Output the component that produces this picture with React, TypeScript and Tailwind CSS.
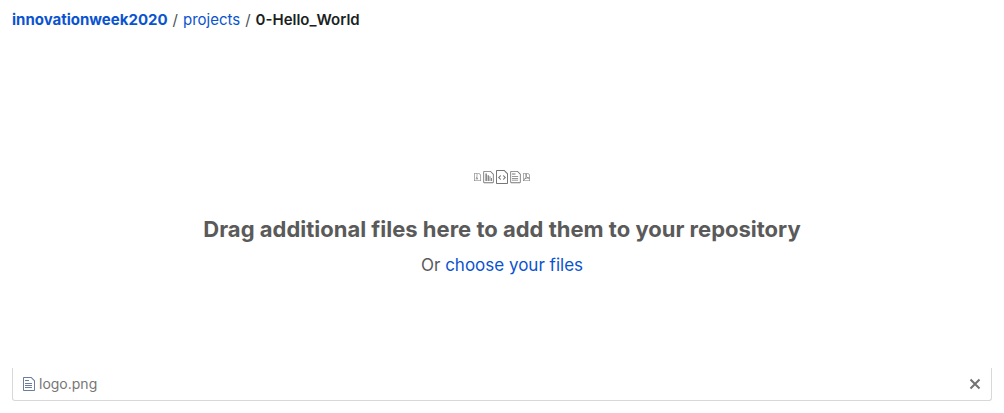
import React from "react";

const PAGE =
  "M8.5 1H1c-.55 0-1 .45-1 1v12c0 .55.45 1 1 1h10c.55 0 1-.45 1-1V4.5L8.5 1zM11 14H1V2h7l3 3v9z";

const GLYPHS = {
  zip: "M5 4V3h1v1H5zM4 4h1v1H4V4zm1 2V5h1v1H5zM4 6h1v1H4V6zm1 2V7h1v1H5zM4 9.28A2 2 0 0 0 3 11v1h4v-1a2 2 0 0 0-2-2V8H4v1.28zM6 10v1H4v-1h2zM4 2h1v1H4z",
  chart: "M2.5 4h1.6v8.5H2.5zM5 6h1.4v6.5H5zM7.2 7h1v5.5h-1zM9 9h1v3.5H9z",
  code: "M5 6.98L3.5 8.5 5 10l-.5 1L2 8.5 4.5 6l.5.98zM7.5 6L10 8.5 7.5 11l-.5-.98L8.5 8.5 7 7l.5-1z",
  text: "M6 5H2V4h4v1zM2 8h7V7H2v1zm0 2h7V9H2v1zm0 2h7v-1H2v1z",
};

type IconProps = { kind: keyof typeof GLYPHS | "pdf"; className: string };

function FileIcon({ kind, className }: IconProps) {
  return (
    <svg viewBox="0 0 12 16" className={className} fill="currentColor" aria-hidden="true">
      <path d={PAGE} />
      {kind === "pdf" ? (
        <path
          d="M1 13.5C4 12 6.4 6.5 5.6 2.6 5.2 1.5 4.6 3.5 5 5c.7 3 3 5 6 5.3M2.8 11C5 9.8 8 9.2 11 9.4"
          fill="none"
          stroke="currentColor"
          strokeWidth="1.3"
        />
      ) : (
        <path d={GLYPHS[kind]} />
      )}
    </svg>
  );
}

export default function App() {
  return (
    <main className="bg-white px-3 pt-2 pb-3 font-['Inter','Liberation_Sans',sans-serif] text-[#586069]">
      <nav aria-label="Breadcrumb" className="flex gap-[5px] text-[15px] leading-6 text-[#4b5158]">
        <a href="#root" className="font-bold text-[#0a53d0]">innovationweek2020</a>
        <span>/</span>
        <a href="#projects" className="text-[#0a53d0]">projects</a>
        <span>/</span>
        <strong className="font-semibold text-[#1b1f23]">0-Hello_World</strong>
      </nav>

      <section className="flex flex-col items-center pt-[135px] pb-[89px] text-center text-[#5a5a5a]">
        <div className="flex h-5 items-center gap-0.5 text-[#777777]">
          <FileIcon kind="zip" className="h-2.5 w-[7px]" />
          <FileIcon kind="chart" className="h-3.5 w-[11px]" />
          <FileIcon kind="code" className="h-4 w-3" />
          <FileIcon kind="text" className="h-3.5 w-[11px]" />
          <FileIcon kind="pdf" className="h-2.5 w-[7px]" />
        </div>
        <h1 className="mt-6 text-[22px] leading-9 font-bold">
          Drag additional files here to add them to your repository
        </h1>
        <p className="mt-1 text-[17px] leading-7">
          Or <a href="#choose" className="text-[#0a53d0]">choose your files</a>
        </p>
      </section>

      <div className="flex items-center gap-1 rounded-b-[3px] border border-t-0 border-[#d8d8d8] px-2.5 py-1.5 text-sm leading-5 text-[#767676]">
        <FileIcon kind="text" className="h-4 w-3 text-[#6a7f9f]" />
        <span>logo.png</span>
        <button type="button" aria-label="Remove logo.png" className="ml-auto text-[#737373]">
          <svg viewBox="0 0 12 12" className="h-3 w-3" fill="none" stroke="currentColor" strokeWidth="2" aria-hidden="true">
            <path d="M1.5 1.5l9 9M10.5 1.5l-9 9" />
          </svg>
        </button>
      </div>
    </main>
  );
}
